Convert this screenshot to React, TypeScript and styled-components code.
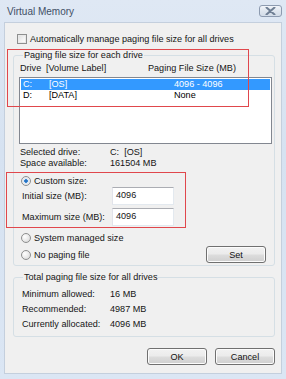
import styled, { createGlobalStyle, css } from 'styled-components';

const GlobalStyle = createGlobalStyle`
  html, body {
    margin: 0;
    padding: 0;
    background: #dfe9f5;
  }
  * {
    box-sizing: border-box;
  }
`;

const drives = [
  { letter: 'C:', label: '[OS]', size: '4096 - 4096', selected: true },
  { letter: 'D:', label: '[DATA]', size: 'None', selected: false },
];

const totals = [
  { name: 'Minimum allowed:', value: '16 MB' },
  { name: 'Recommended:', value: '4987 MB' },
  { name: 'Currently allocated:', value: '4096 MB' },
];

const App = () => {
  return (
    <>
      <GlobalStyle />
      <Window>
        <TitleBar>
          <Title>Virtual Memory</Title>
          <CloseButton>
            <svg width="11" height="8" viewBox="0 0 11 8">
              <path
                d="M1.5 0.5 L9.5 7.5 M9.5 0.5 L1.5 7.5"
                stroke="#6f7f94"
                strokeWidth="2"
                strokeLinecap="round"
              />
            </svg>
          </CloseButton>
        </TitleBar>

        <Body>
          <CheckRow>
            <CheckBox />
            <span>Automatically manage paging file size for all drives</span>
          </CheckRow>

          <Group $top={5}>
            <Legend>Paging file size for each drive</Legend>
            <DriveHeader>
              <span>Drive</span>
              <span>[Volume Label]</span>
              <span>Paging File Size (MB)</span>
            </DriveHeader>
            <ListBox>
              {drives.map((d) => (
                <DriveRow key={d.letter} $selected={d.selected}>
                  <span>{d.letter}</span>
                  <span>{d.label}</span>
                  <span>{d.size}</span>
                </DriveRow>
              ))}
            </ListBox>

            <InfoGrid>
              <span>Selected drive:</span>
              <span>C:&nbsp;&nbsp;[OS]</span>
              <span>Space available:</span>
              <span>161504 MB</span>
            </InfoGrid>

            <RadioRow $top={6}>
              <Radio $checked />
              <span>Custom size:</span>
            </RadioRow>
            <SizeRow $top={1}>
              <span>Initial size (MB):</span>
              <TextBox>4096</TextBox>
            </SizeRow>
            <SizeRow $top={3}>
              <span>Maximum size (MB):</span>
              <TextBox>4096</TextBox>
            </SizeRow>
            <RadioRow $top={6}>
              <Radio />
              <span>System managed size</span>
            </RadioRow>
            <SetRow>
              <RadioRow>
                <Radio />
                <span>No paging file</span>
              </RadioRow>
              <Button $width={60}>Set</Button>
            </SetRow>
          </Group>

          <Group $top={6}>
            <Legend>Total paging file size for all drives</Legend>
            <TotalsGrid>
              {totals.map((t) => (
                <TotalRow key={t.name}>
                  <span>{t.name}</span>
                  <span>{t.value}</span>
                </TotalRow>
              ))}
            </TotalsGrid>
          </Group>

          <ButtonBar>
            <Button $width={60}>OK</Button>
            <Button $width={60}>Cancel</Button>
          </ButtonBar>
        </Body>

        <Highlight $left={7} $top={49} $width={242} $height={58} />
        <Highlight $left={6} $top={172} $width={180} $height={56} />
      </Window>
    </>
  );
};

const Window = styled.div`
  position: relative;
  width: 286px;
  height: 379px;
  padding: 0 4px 5px 4px;
  background: linear-gradient(180deg, #dfe8f4 0%, #d6e2f1 40%, #dbe6f4 100%);
  font-family: 'Liberation Sans', Arial, sans-serif;
  font-size: 9.1px;
  color: #151515;
  display: flex;
  flex-direction: column;
`;

const TitleBar = styled.div`
  height: 22px;
  display: flex;
  align-items: center;
  justify-content: space-between;
  padding: 1px 0 0 3px;
`;

const Title = styled.div`
  font-size: 10px;
  color: #3f4f66;
`;

const CloseButton = styled.div`
  width: 23px;
  height: 12px;
  margin-top: -2px;
  border: 1px solid #8d9bb0;
  border-radius: 3px;
  background: linear-gradient(180deg, #f2f5fa 0%, #dfe6ef 50%, #d3dce8 100%);
  display: flex;
  align-items: center;
  justify-content: center;
`;

const Body = styled.div`
  flex: 1;
  background: #f0f0f0;
  border: 1px solid #c4cfdd;
  padding: 0 6px 0 8px;
  display: flex;
  flex-direction: column;
`;

const CheckRow = styled.div`
  display: flex;
  align-items: center;
  height: 12px;
  margin-top: 10px;
  padding-left: 4px;
  gap: 3px;
`;

const CheckBox = styled.span`
  width: 10px;
  height: 10px;
  border: 1px solid #8e8f8f;
  background: linear-gradient(135deg, #dcdcdc 0%, #f4f4f4 60%, #ffffff 100%);
  box-shadow: inset 0 0 0 1px #e9e9e9;
`;

const Group = styled.fieldset<{ $top: number }>`
  margin: ${({ $top }) => $top}px 0 0 0;
  padding: 0 2px 2px 5px;
  border: 1px solid #d5dfe5;
  border-radius: 3px;
  min-width: 0;
`;

const Legend = styled.legend`
  padding: 0 1px;
  margin-left: 4px;
  line-height: 11px;
`;

const DriveHeader = styled.div`
  display: grid;
  grid-template-columns: 26px 102px 1fr;
  line-height: 11px;
  margin-top: 2px;
  padding-left: 1px;
`;

const ListBox = styled.div`
  height: 67px;
  margin-top: 3px;
  border: 1px solid #828790;
  background: #ffffff;
  padding: 1px;
`;

const DriveRow = styled.div<{ $selected: boolean }>`
  display: grid;
  grid-template-columns: 26px 125px 1fr;
  height: 11px;
  line-height: 11px;
  padding-left: 2px;
  color: #000000;

  ${({ $selected }) =>
    $selected &&
    css`
      background: #3399ff;
      color: #ffffff;
    `}
`;

const InfoGrid = styled.div`
  display: grid;
  grid-template-columns: 90px 1fr;
  line-height: 11px;
  margin-top: 3px;
  padding-left: 1px;
`;

const RadioRow = styled.div<{ $top?: number }>`
  display: flex;
  align-items: center;
  gap: 3px;
  height: 11px;
  margin-top: ${({ $top }) => $top ?? 0}px;
  padding-left: 2px;
`;

const Radio = styled.span<{ $checked?: boolean }>`
  width: 10px;
  height: 10px;
  border-radius: 50%;
  border: 1px solid #8e8f8f;
  background: radial-gradient(circle at 35% 35%, #ffffff 0%, #e6e6e6 60%, #cfcfcf 100%);

  ${({ $checked }) =>
    $checked &&
    css`
      background: radial-gradient(
        circle at 50% 50%,
        #1d5fa8 0%,
        #3a8ad8 28%,
        #dfe6ee 34%,
        #f4f4f4 100%
      );
    `}
`;

const SizeRow = styled.div<{ $top: number }>`
  display: grid;
  grid-template-columns: 90px 62px;
  align-items: center;
  margin-top: ${({ $top }) => $top}px;
  padding-left: 3px;
`;

const TextBox = styled.div`
  height: 18px;
  border: 1px solid #abadb3;
  border-color: #abadb3 #e3e9ef #e3e9ef #e2e3ea;
  background: #ffffff;
  padding: 2px 3px 0 3px;
  line-height: 11px;
`;

const SetRow = styled.div`
  display: flex;
  align-items: center;
  justify-content: space-between;
  margin-top: 3px;
  padding-right: 6px;
`;

const Button = styled.div<{ $width: number }>`
  width: ${({ $width }) => $width}px;
  height: 17px;
  border: 1px solid #707070;
  border-radius: 3px;
  background: linear-gradient(180deg, #f2f2f2 0%, #ebebeb 48%, #dddddd 52%, #cfcfcf 100%);
  box-shadow: inset 0 0 0 1px #fcfcfc;
  display: flex;
  align-items: center;
  justify-content: center;
  color: #111111;
`;

const TotalsGrid = styled.div`
  margin-top: 4px;
  padding-bottom: 2px;
`;

const TotalRow = styled.div`
  display: grid;
  grid-template-columns: 88px 1fr;
  line-height: 15px;
  padding-left: 3px;
`;

const ButtonBar = styled.div`
  display: flex;
  justify-content: flex-end;
  gap: 8px;
  margin-top: 11px;
`;

const Highlight = styled.div<{
  $left: number;
  $top: number;
  $width: number;
  $height: number;
}>`
  position: absolute;
  left: ${({ $left }) => $left}px;
  top: ${({ $top }) => $top}px;
  width: ${({ $width }) => $width}px;
  height: ${({ $height }) => $height}px;
  border: 1px solid #e0474c;
  pointer-events: none;
`;

export default App;
